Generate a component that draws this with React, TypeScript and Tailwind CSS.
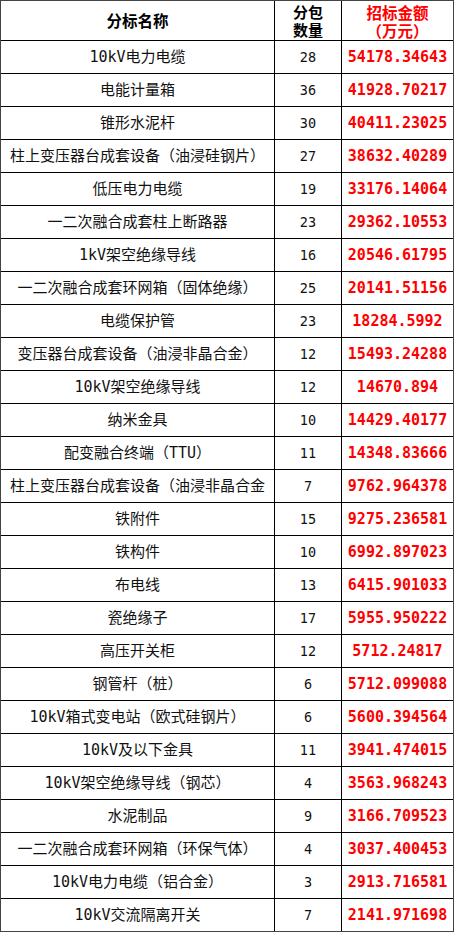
const rows: [string, string, string][] = [
  ["10kV电力电缆", "28", "54178.34643"],
  ["电能计量箱", "36", "41928.70217"],
  ["锥形水泥杆", "30", "40411.23025"],
  ["柱上变压器台成套设备（油浸硅钢片）", "27", "38632.40289"],
  ["低压电力电缆", "19", "33176.14064"],
  ["一二次融合成套柱上断路器", "23", "29362.10553"],
  ["1kV架空绝缘导线", "16", "20546.61795"],
  ["一二次融合成套环网箱（固体绝缘）", "25", "20141.51156"],
  ["电缆保护管", "23", "18284.5992"],
  ["变压器台成套设备（油浸非晶合金）", "12", "15493.24288"],
  ["10kV架空绝缘导线", "12", "14670.894"],
  ["纳米金具", "10", "14429.40177"],
  ["配变融合终端（TTU）", "11", "14348.83666"],
  ["柱上变压器台成套设备（油浸非晶合金", "7", "9762.964378"],
  ["铁附件", "15", "9275.236581"],
  ["铁构件", "10", "6992.897023"],
  ["布电线", "13", "6415.901033"],
  ["瓷绝缘子", "17", "5955.950222"],
  ["高压开关柜", "12", "5712.24817"],
  ["钢管杆（桩）", "6", "5712.099088"],
  ["10kV箱式变电站（欧式硅钢片）", "6", "5600.394564"],
  ["10kV及以下金具", "11", "3941.474015"],
  ["10kV架空绝缘导线（钢芯）", "4", "3563.968243"],
  ["水泥制品", "9", "3166.709523"],
  ["一二次融合成套环网箱（环保气体）", "4", "3037.400453"],
  ["10kV电力电缆（铝合金）", "3", "2913.716581"],
  ["10kV交流隔离开关", "7", "2141.971698"],
]

export default function App() {
  return (
    <div className="bg-white w-[455px] h-[932px]">
      <div className="w-[454px] border border-[#444444] bg-white">
        {/* header */}
        <div className="grid grid-cols-[274px_67px_1fr] h-[40px] border-b border-black font-bold font-['Noto_Sans_CJK_SC',sans-serif]">
          <div className="border-r border-black flex items-center justify-center text-[15.5px] text-black">分标名称</div>
          <div className="border-r border-black flex items-center justify-center text-center text-[15px] leading-[18px] text-black">
            <p>
              分包
              <br />
              数量
            </p>
          </div>
          <div className="flex items-center justify-center text-center text-[15.5px] leading-[18px] text-[#ff0000]">
            <p>
              招标金额
              <br />
              （万元）
            </p>
          </div>
        </div>

        {rows.map(([name, qty, amount], i) => (
          <div
            key={i}
            className={
              i === rows.length - 1
                ? "grid grid-cols-[274px_67px_1fr] h-[32px]"
                : "grid grid-cols-[274px_67px_1fr] h-[33px] border-b border-black"
            }
          >
            <div className="border-r border-black flex items-center justify-center overflow-hidden whitespace-nowrap text-[15px] text-[#111] font-['DejaVu_Sans_Mono','Noto_Sans_CJK_SC',monospace]">
              {name}
            </div>
            <div className="border-r border-black flex items-center justify-center text-[13.5px] text-[#111] font-['DejaVu_Sans_Mono',monospace]">
              {qty}
            </div>
            <div className="flex items-center justify-center text-[15px] font-bold text-[#ff0000] font-['DejaVu_Sans_Mono',monospace]">
              {amount}
            </div>
          </div>
        ))}
      </div>
    </div>
  )
}
